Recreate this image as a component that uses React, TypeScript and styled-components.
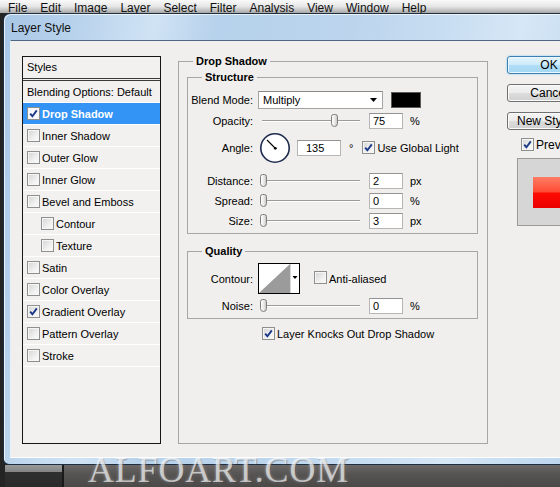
import React from 'react';
import styled, { createGlobalStyle } from 'styled-components';

const GlobalStyle = createGlobalStyle`
  html, body {
    margin: 0;
    padding: 0;
  }
  body {
    width: 560px;
    height: 487px;
    overflow: hidden;
    background: #242424;
    font-family: "Liberation Sans", Arial, sans-serif;
    font-size: 11px;
    color: #000;
  }
`;

const Screen = styled.div`
  position: relative;
  width: 560px;
  height: 487px;
  display: flex;
  flex-direction: column;
  overflow: hidden;
  background: #242424;
`;

const MenuBar = styled.div`
  flex: none;
  height: 13px;
  display: flex;
  gap: 13px;
  padding-left: 8px;
  overflow: hidden;
  background: linear-gradient(#fafafa, #e6e6e6 50%, #a8a8a8);
  font-size: 12px;
  line-height: 17px;
  color: #111;
`;

const Dialog = styled.div`
  flex: none;
  height: 452px;
  box-sizing: border-box;
  margin-left: 3px;
  display: flex;
  flex-direction: column;
  border: 1px solid #1f2f42;
  border-right: none;
  border-radius: 7px 0 0 6px;
  padding: 0 0 6px 6px;
  background: linear-gradient(
    100deg,
    #a7c6e6 0%,
    #b9d3ec 12%,
    #d0e3f4 24%,
    #b6d1eb 34%,
    #bcd5ed 55%,
    #c6dcf1 68%,
    #d6e7f6 82%,
    #bdd6ee 100%
  );
  box-shadow: inset 1px 1px 0 rgba(255, 255, 255, 0.7);
`;

const TitleBar = styled.div`
  flex: none;
  height: 26px;
  display: flex;
  align-items: center;
  padding: 1px 0 0 1px;
  box-sizing: border-box;
  font-size: 12px;
  color: #111;
`;

const Client = styled.div`
  flex: 1;
  display: flex;
  align-items: flex-start;
  padding: 14px 0 0 11px;
  border: 1px solid #4d6783;
  border-left-color: #e9f1f8;
  border-bottom-color: #ffffff;
  border-right: none;
  background: #f0efed;
`;

/* ---------- left list ---------- */

const StylesPanel = styled.div`
  flex: none;
  width: 139px;
  height: 388px;
  box-sizing: border-box;
  margin-top: 1px;
  border: 1px solid #161616;
  background: #f2f1ef;
`;

const PanelHeader = styled.div`
  height: 21px;
  line-height: 21px;
  padding-left: 4px;
  border-bottom: 3px double #3a3a3a;
`;

const StyleRow = styled.div<{ $active?: boolean; $indent?: boolean }>`
  height: 21px;
  display: flex;
  align-items: center;
  gap: 2px;
  padding-left: ${p => (p.$indent ? 18 : 4)}px;
  border-bottom: 1px solid #ffffff;
  background: ${p => (p.$active ? '#3394f6' : 'transparent')};
  color: ${p => (p.$active ? '#fff' : '#000')};
  font-weight: ${p => (p.$active ? 'bold' : 'normal')};
  white-space: nowrap;
`;

const Box = styled.span<{ $onBlue?: boolean }>`
  flex: none;
  width: 13px;
  height: 13px;
  box-sizing: border-box;
  display: inline-flex;
  align-items: center;
  justify-content: center;
  border: 1px solid #8e8f8f;
  background: ${p =>
    p.$onBlue ? '#f7f9fc' : 'linear-gradient(135deg, #d3d3d3, #f0f0f0 60%, #fbfbfb)'};
  box-shadow: inset 0 0 0 1px #f6f6f6;
`;

const Check = ({ on = false, onBlue = false }) => (
  <Box $onBlue={onBlue}>
    {on && (
      <svg width="11" height="11" viewBox="0 0 11 11">
        <path d="M2.2 5.6 L4.4 8.2 L8.8 2.4" fill="none" stroke="#1b3888" strokeWidth="1.9" />
      </svg>
    )}
  </Box>
);

/* ---------- group boxes ---------- */

const Group = styled.fieldset<{ $w: number; $h?: number }>`
  flex: none;
  margin: 0;
  padding: 0;
  min-width: 0;
  width: ${p => p.$w}px;
  ${p => (p.$h ? `height: ${p.$h}px;` : '')}
  box-sizing: border-box;
  border: 1px solid #a6a6a6;
`;

const Legend = styled.legend`
  margin-left: 14px;
  padding: 0 3px;
  font-weight: bold;
  font-size: 11px;
  line-height: 13px;
`;

const MainGroup = styled(Group)`
  margin-left: 17px;
  margin-top: 0;
`;

const GroupBody = styled.div<{ $pad: string }>`
  padding: ${p => p.$pad};
`;

const SubGroup = styled(Group)<{ $top: number }>`
  margin-top: ${p => p.$top}px;
`;

const Field = styled.div<{ $h?: number; $gap?: number; $indent?: number }>`
  display: flex;
  align-items: center;
  height: ${p => p.$h ?? 16}px;
  margin-top: ${p => p.$gap ?? 0}px;
  padding-left: ${p => p.$indent ?? 0}px;
  white-space: nowrap;
`;

const Label = styled.span`
  flex: none;
  width: 65px;
  margin-right: 5px;
  text-align: right;
`;

const Select = styled.div`
  flex: none;
  width: 125px;
  height: 18px;
  box-sizing: border-box;
  display: flex;
  align-items: center;
  justify-content: space-between;
  padding: 0 5px 0 4px;
  border: 1px solid #a3a3a3;
  border-top-color: #8a8a8a;
  background: #fff;
`;

const Swatch = styled.div`
  flex: none;
  width: 30px;
  height: 16px;
  box-sizing: border-box;
  margin-left: 8px;
  border: 1px solid #5a5a5a;
  background: #000;
`;

const Slider = styled.div`
  position: relative;
  flex: none;
  width: 106px;
  height: 16px;

  &::before {
    content: '';
    position: absolute;
    left: 4px;
    right: 4px;
    top: 7px;
    height: 1px;
    background: #9b9b9b;
    box-shadow: 0 1px 0 #ffffff;
  }
`;

const Thumb = styled.span`
  position: absolute;
  top: 1px;
  width: 7px;
  height: 13px;
  box-sizing: border-box;
  border: 1px solid #7d7d7d;
  border-radius: 3px 3px 4px 4px;
  background: linear-gradient(90deg, #ffffff, #e6e6e6 60%, #c9c9c9);
`;

const NumBox = styled.div<{ $w?: number; $pad?: number; $gap?: number }>`
  flex: none;
  width: ${p => p.$w ?? 34}px;
  height: 16px;
  box-sizing: border-box;
  margin-left: ${p => p.$gap ?? 5}px;
  padding-left: ${p => p.$pad ?? 3}px;
  border: 1px solid #b6b6b6;
  border-top-color: #939393;
  background: #fff;
  line-height: 14px;
`;

const Unit = styled.span<{ $gap?: number }>`
  margin-left: ${p => p.$gap ?? 7}px;
`;

const Dial = styled.div`
  flex: none;
  width: 32px;
  height: 32px;
  margin-left: 1px;
`;

const ContourBox = styled.div`
  flex: none;
  width: 42px;
  height: 31px;
  box-sizing: border-box;
  border: 1px solid #000;
  background: #fff;
`;

const CheckLabel = styled.span<{ $gap?: number }>`
  margin-left: ${p => p.$gap ?? 3}px;
`;

/* ---------- right column ---------- */

const Side = styled.div`
  flex: none;
  width: 90px;
  margin-left: 19px;
  margin-top: 1px;
  display: flex;
  flex-direction: column;
`;

const Button = styled.div<{ $primary?: boolean }>`
  flex: none;
  width: 84px;
  height: 18px;
  box-sizing: border-box;
  margin-bottom: 10px;
  display: flex;
  align-items: center;
  justify-content: center;
  border: 1px solid ${p => (p.$primary ? '#3c7fb1' : '#707070')};
  border-radius: 3px;
  background: ${p =>
    p.$primary
      ? 'linear-gradient(#e6f5fd, #cdeafa 48%, #b0def7 52%, #a4d6f3)'
      : 'linear-gradient(#f4f4f4, #ececec 48%, #dddddd 52%, #d0d0d0)'};
  box-shadow: ${p => (p.$primary ? '0 0 2px #6ec6f3, inset 0 0 0 1px #eaf7fe' : 'inset 0 0 0 1px #fbfbfb')};
  font-size: 12px;
`;

const PreviewToggle = styled.div`
  display: flex;
  align-items: center;
  height: 13px;
  margin-top: -2px;
  padding-left: 14px;
  font-size: 12px;
  white-space: nowrap;
`;

const PreviewBox = styled.div`
  margin: 7px 0 0 10px;
  height: 68px;
  box-sizing: border-box;
  padding: 18px 0 0 15px;
  border: 1px solid #9a9a9a;
  border-right: none;
  background: #d6d6d6;
`;

const PreviewSwatch = styled.div`
  height: 31px;
  background: linear-gradient(#ff7d64, #ff4b34 48%, #ff0c02 52%, #e90000);
`;

/* ---------- below dialog ---------- */

const Desk = styled.div`
  flex: 1;
  display: flex;
`;

const DeskLeft = styled.div`
  flex: none;
  width: 57px;
  margin-left: 5px;
  border-right: 2px solid #1a1a1a;
  background: linear-gradient(#9a9a9a, #838383 7px, #2f2f2f 7px, #2a2a2a);
`;

const DeskRight = styled.div`
  flex: 1;
  background: linear-gradient(#6a6766, #575554 40%, #4b4948);
`;

const Watermark = styled.div`
  position: absolute;
  left: 88px;
  top: 450px;
  font-family: "Liberation Serif", "Times New Roman", serif;
  font-size: 36px;
  line-height: 40px;
  letter-spacing: 0.8px;
  color: rgba(255, 255, 255, 0.62);
  text-shadow: 0 0 3px rgba(255, 255, 255, 0.45), 1px 1px 1px rgba(0, 0, 0, 0.35);
  white-space: nowrap;
`;

const menu = ['File', 'Edit', 'Image', 'Layer', 'Select', 'Filter', 'Analysis', 'View', 'Window', 'Help'];

const effects = [
  { name: 'Drop Shadow', on: true, active: true },
  { name: 'Inner Shadow' },
  { name: 'Outer Glow' },
  { name: 'Inner Glow' },
  { name: 'Bevel and Emboss' },
  { name: 'Contour', indent: true },
  { name: 'Texture', indent: true },
  { name: 'Satin' },
  { name: 'Color Overlay' },
  { name: 'Gradient Overlay', on: true },
  { name: 'Pattern Overlay' },
  { name: 'Stroke' },
];

const SliderField = ({ label, value, unit, pct, gap = 4 }) => (
  <Field $gap={gap}>
    <Label>{label}</Label>
    <Slider>
      <Thumb style={{ left: 2 + pct * 94 }} />
    </Slider>
    <NumBox>{value}</NumBox>
    <Unit>{unit}</Unit>
  </Field>
);

const AngleDial = () => (
  <Dial>
    <svg width="32" height="32" viewBox="0 0 32 32">
      <circle cx="16" cy="16" r="15" fill="#dfe3ea" />
      <circle cx="16" cy="16" r="14.2" fill="#fff" stroke="#1f2b4d" strokeWidth="1.6" />
      <line x1="16" y1="16" x2="8" y2="8" stroke="#000" strokeWidth="1.1" />
      <circle cx="16.3" cy="16.3" r="1.4" fill="#000" />
    </svg>
  </Dial>
);

export default function App() {
  return (
    <Screen>
      <GlobalStyle />
      <MenuBar>
        {menu.map(m => (
          <span key={m}>{m}</span>
        ))}
      </MenuBar>

      <Dialog>
        <TitleBar>Layer Style</TitleBar>
        <Client>
          <StylesPanel>
            <PanelHeader>Styles</PanelHeader>
            <StyleRow>Blending Options: Default</StyleRow>
            {effects.map(e => (
              <StyleRow key={e.name} $active={e.active} $indent={e.indent}>
                <Check on={e.on} onBlue={e.active} />
                {e.name}
              </StyleRow>
            ))}
          </StylesPanel>

          <MainGroup $w={310} $h={389}>
            <Legend>Drop Shadow</Legend>
            <GroupBody $pad="3px 0 0 8px">
              <SubGroup $w={291} $top={0}>
                <Legend>Structure</Legend>
                <GroupBody $pad="7px 0 4px 0">
                  <Field $h={18}>
                    <Label>Blend Mode:</Label>
                    <Select>
                      <span>Multiply</span>
                      <svg width="7" height="4" viewBox="0 0 7 4">
                        <path d="M0 0 H7 L3.5 4 Z" fill="#000" />
                      </svg>
                    </Select>
                    <Swatch />
                  </Field>
                  <SliderField label="Opacity:" value="75" unit="%" pct={0.75} />
                  <Field $h={32} $gap={3}>
                    <Label>Angle:</Label>
                    <AngleDial />
                    <NumBox $w={44} $pad={8} $gap={6}>135</NumBox>
                    <Unit $gap={8}>°</Unit>
                    <CheckLabel $gap={9}>
                      <Check on />
                    </CheckLabel>
                    <CheckLabel $gap={2}>Use Global Light</CheckLabel>
                  </Field>
                  <SliderField label="Distance:" value="2" unit="px" pct={0} gap={9} />
                  <SliderField label="Spread:" value="0" unit="%" pct={0} />
                  <SliderField label="Size:" value="3" unit="px" pct={0} />
                </GroupBody>
              </SubGroup>

              <SubGroup $w={291} $top={11}>
                <Legend>Quality</Legend>
                <GroupBody $pad="5px 0 4px 0">
                  <Field $h={31}>
                    <Label>Contour:</Label>
                    <ContourBox>
                      <svg width="40" height="29" viewBox="0 0 40 29">
                        <path d="M0 29 L31 0 L31 29 Z" fill="#9b9b9b" />
                        <line x1="31.5" y1="0" x2="31.5" y2="29" stroke="#d8d8d8" strokeWidth="1" />
                        <path d="M33.5 12 H38.5 L36 15 Z" fill="#000" />
                      </svg>
                    </ContourBox>
                    <CheckLabel $gap={14}>
                      <Check />
                    </CheckLabel>
                    <CheckLabel $gap={2}>Anti-aliased</CheckLabel>
                  </Field>
                  <SliderField label="Noise:" value="0" unit="%" pct={0} />
                </GroupBody>
              </SubGroup>

              <Field $h={13} $gap={8} $indent={75}>
                <Check on />
                <CheckLabel $gap={2}>Layer Knocks Out Drop Shadow</CheckLabel>
              </Field>
            </GroupBody>
          </MainGroup>

          <Side>
            <Button $primary>OK</Button>
            <Button>Cancel</Button>
            <Button>New Style...</Button>
            <PreviewToggle>
              <Check on />
              <CheckLabel $gap={2}>Preview</CheckLabel>
            </PreviewToggle>
            <PreviewBox>
              <PreviewSwatch />
            </PreviewBox>
          </Side>
        </Client>
      </Dialog>

      <Desk>
        <DeskLeft />
        <DeskRight />
      </Desk>
      <Watermark>ALFOART.COM</Watermark>
    </Screen>
  );
}
